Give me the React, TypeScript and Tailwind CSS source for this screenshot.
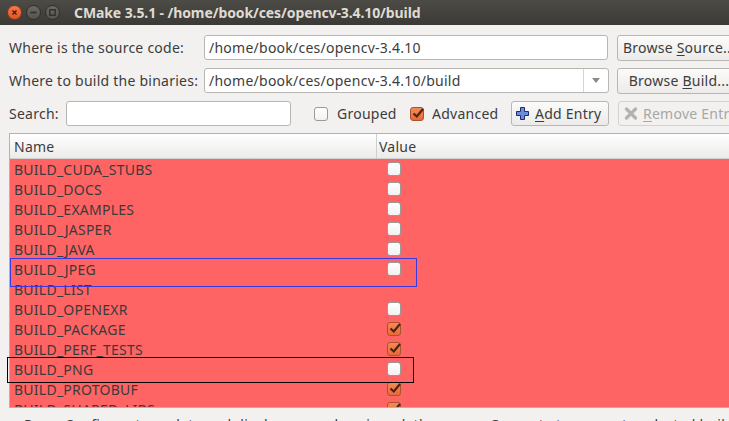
import React from 'react';

type Row = { name: string; value: 'on' | 'off' | 'none' };

const rows: Row[] = [
  { name: 'BUILD_CUDA_STUBS', value: 'off' },
  { name: 'BUILD_DOCS', value: 'off' },
  { name: 'BUILD_EXAMPLES', value: 'off' },
  { name: 'BUILD_JASPER', value: 'off' },
  { name: 'BUILD_JAVA', value: 'off' },
  { name: 'BUILD_JPEG', value: 'off' },
  { name: 'BUILD_LIST', value: 'none' },
  { name: 'BUILD_OPENEXR', value: 'off' },
  { name: 'BUILD_PACKAGE', value: 'on' },
  { name: 'BUILD_PERF_TESTS', value: 'on' },
  { name: 'BUILD_PNG', value: 'off' },
  { name: 'BUILD_PROTOBUF', value: 'on' },
  { name: 'BUILD_SHARED_LIBS', value: 'on' },
];

const Check: React.FC<{ on?: boolean }> = ({ on }) =>
  on ? (
    <span className="relative block w-[14px] h-[14px] rounded-[3px] border border-[#a9532b] bg-gradient-to-b from-[#f58a55] to-[#e8683a] shrink-0">
      <svg className="absolute -top-[2px] left-0" width="15" height="15" viewBox="0 0 15 15">
        <path d="M2.5 7.5 L5.8 10.5 L12 3" fill="none" stroke="#4a2416" strokeWidth="2.2" />
      </svg>
    </span>
  ) : (
    <span className="block w-[14px] h-[14px] rounded-[3px] border border-[#9a9a98] bg-gradient-to-b from-[#ffffff] to-[#f1f1f1] shrink-0" />
  );

const WinBtn: React.FC<{ kind: 'close' | 'min' | 'max' }> = ({ kind }) => (
  <span
    className={
      kind === 'close'
        ? 'w-[15px] h-[15px] rounded-full bg-gradient-to-b from-[#f6784a] to-[#dc5525] border border-[#8a3518] flex items-center justify-center'
        : 'w-[15px] h-[15px] rounded-full bg-gradient-to-b from-[#6a6964] to-[#55544f] border border-[#2e2d2a] flex items-center justify-center'
    }
  >
    <svg width="9" height="9" viewBox="0 0 9 9">
      {kind === 'close' && <path d="M2.5 2.5 L6.5 6.5 M6.5 2.5 L2.5 6.5" stroke="#4a1a0a" strokeWidth="1.4" />}
      {kind === 'min' && <path d="M1.5 4.5 H7.5" stroke="#2e2d2a" strokeWidth="1.6" />}
      {kind === 'max' && <rect x="1.8" y="1.8" width="5.4" height="5.4" fill="none" stroke="#2e2d2a" strokeWidth="1.3" />}
    </svg>
  </span>
);

const App: React.FC = () => {
  return (
    <div className="relative w-[729px] h-[421px] overflow-hidden bg-[#f2f1f0] text-[14px] text-[#3c3c3c] flex flex-col" style={{ fontFamily: '"Noto Sans", "Open Sans", sans-serif' }}>
      {/* title bar */}
      <div className="h-[25px] shrink-0 bg-gradient-to-b from-[#4c4b46] to-[#3b3a36] flex items-center pl-[7px]">
        <div className="flex gap-[4px]">
          <WinBtn kind="close" />
          <WinBtn kind="min" />
          <WinBtn kind="max" />
        </div>
        <span className="ml-[14px] text-[14px] font-bold text-[#dfdbd2] whitespace-nowrap tracking-[-0.1px]">
          CMake 3.5.1 - /home/book/ces/opencv-3.4.10/build
        </span>
      </div>

      <div className="flex flex-col shrink-0 pl-[9px] pt-[10px] tracking-[0.25px]">
        {/* source */}
        <div className="flex items-center shrink-0 h-[25px]">
          <span className="w-[195px] shrink-0 whitespace-nowrap">Where is the source code:</span>
          <div className="w-[404px] shrink-0 h-[25px] bg-white border border-[#b7b6b3] rounded-[3px] flex items-center pl-[4px] whitespace-nowrap">
            /home/book/ces/opencv-3.4.10
          </div>
          <button className="ml-[9px] w-[124px] h-[26px] shrink-0 rounded-[3px] border border-[#b7b6b3] bg-gradient-to-b from-[#fbfbfa] to-[#ecebe9] whitespace-nowrap">
            Browse <span className="underline underline-offset-2">S</span>ource...
          </button>
        </div>

        {/* build */}
        <div className="flex items-center shrink-0 h-[25px] mt-[8px]">
          <span className="w-[195px] shrink-0 whitespace-nowrap">Where to build the binaries:</span>
          <div className="w-[405px] shrink-0 h-[25px] bg-white border border-[#b7b6b3] rounded-[3px] flex items-center">
            <span className="flex-1 pl-[4px] whitespace-nowrap">/home/book/ces/opencv-3.4.10/build</span>
            <span className="w-[25px] h-full border-l border-[#d6d5d2] flex items-center justify-center">
              <svg width="8" height="5" viewBox="0 0 8 5">
                <path d="M0 0 H8 L4 5 Z" fill="#8a8a88" />
              </svg>
            </span>
          </div>
          <button className="ml-[8px] w-[124px] h-[26px] shrink-0 rounded-[3px] border border-[#b7b6b3] bg-gradient-to-b from-[#fbfbfa] to-[#ecebe9] whitespace-nowrap">
            Browse <span className="underline underline-offset-2">B</span>uild...
          </button>
        </div>

        {/* search / options */}
        <div className="flex items-center shrink-0 h-[25px] mt-[8px]">
          <span className="w-[57px] shrink-0 whitespace-nowrap">Search:</span>
          <div className="w-[225px] shrink-0 h-[25px] bg-white border border-[#b7b6b3] rounded-[3px]" />
          <span className="ml-[23px] shrink-0"><Check /></span>
          <span className="ml-[9px] w-[73px] shrink-0 whitespace-nowrap">Grouped</span>
          <span className="shrink-0"><Check on /></span>
          <span className="ml-[8px] w-[79px] shrink-0 whitespace-nowrap">Advanced</span>
          <button className="w-[98px] h-[25px] shrink-0 rounded-[3px] border border-[#b7b6b3] bg-gradient-to-b from-[#fbfbfa] to-[#ecebe9] flex items-center pl-[4px] gap-[6px] whitespace-nowrap">
            <svg width="13" height="13" viewBox="0 0 13 13">
              <path d="M4.5 0.5 H8.5 V4.5 H12.5 V8.5 H8.5 V12.5 H4.5 V8.5 H0.5 V4.5 H4.5 Z" fill="#6b8ed6" stroke="#1c2c6e" strokeWidth="1" />
            </svg>
            <span><span className="underline underline-offset-2">A</span>dd Entry</span>
          </button>
          <button className="ml-[9px] w-[124px] h-[25px] shrink-0 rounded-[3px] border border-[#d4d3d0] bg-[#f2f1f0] flex items-center pl-[5px] gap-[5px] whitespace-nowrap text-[#a8a7a4]">
            <svg width="14" height="13" viewBox="0 0 14 13">
              <path d="M2.5 2 L11.5 11 M11.5 2 L2.5 11" stroke="#b3b2af" strokeWidth="3.2" strokeLinecap="round" />
            </svg>
            <span><span className="underline underline-offset-2">R</span>emove Entry</span>
          </button>
        </div>

        {/* cache table */}
        <div className="relative shrink-0 mt-[7px] h-[275px] border border-[#b3b2af] border-r-0 bg-white overflow-hidden">
          <div className="flex h-[25px] bg-gradient-to-b from-[#ffffff] to-[#ecebea] border-b border-[#d0cfcc]">
            <span className="w-[367px] shrink-0 pl-[4px] flex items-center border-r border-[#d0cfcc]">Name</span>
            <span className="pl-[2px] flex items-center">Value</span>
          </div>
          {rows.map((r) => (
            <div key={r.name} className="flex shrink-0 h-[20px] bg-[#ff6464] text-[#3a3a3a]">
              <span className="w-[368px] shrink-0 pl-[4px] flex items-center whitespace-nowrap">{r.name}</span>
              <span className="pl-[9px] flex items-center">
                {r.value !== 'none' && <Check on={r.value === 'on'} />}
              </span>
            </div>
          ))}
          {/* highlight frame */}
          <div className="absolute left-0 top-[124px] w-[407px] h-[29px] border border-[#3a3ae0]" />
        </div>

        <div className="shrink-0 mt-[6px] pl-[15px] whitespace-nowrap">
          Press Configure to update and display new values in red, then press Generate to generate selected build files.
        </div>
      </div>

      <div className="absolute left-[7px] top-[357px] w-[407px] h-[26px] border border-black" />
    </div>
  );
};

export default App;
